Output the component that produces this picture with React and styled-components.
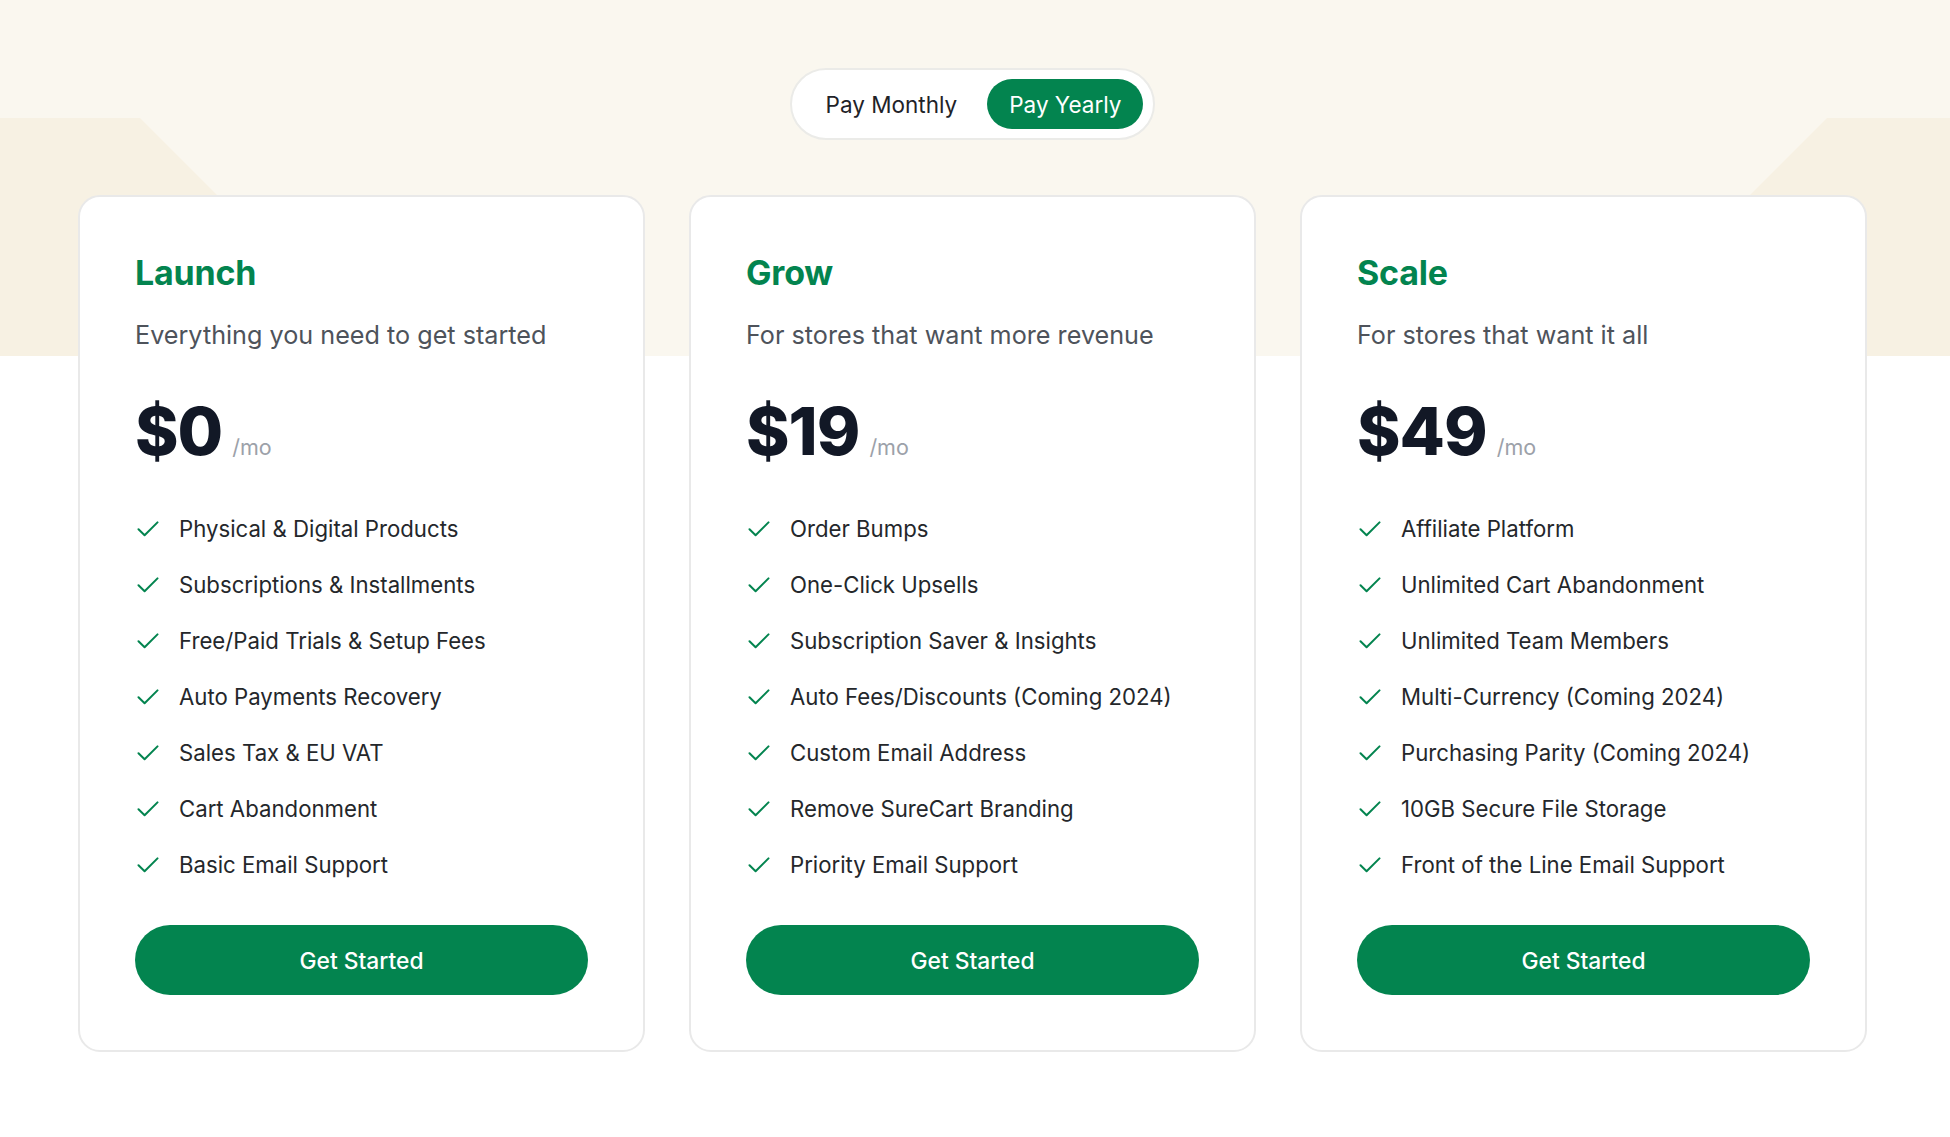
import React, { useState } from 'react';
import styled, { createGlobalStyle } from 'styled-components';

const GlobalStyle = createGlobalStyle`
  * { box-sizing: border-box; }
  body {
    margin: 0;
    font-family: Inter, "Noto Sans", sans-serif;
    background: #ffffff;
    -webkit-font-smoothing: antialiased;
  }
`;

const Page = styled.div`
  position: relative;
  min-height: 1137px;
  padding-top: 68px;
  background: #ffffff;

  /* cream band with darker side wedges */
  &::before {
    content: '';
    position: absolute;
    left: 0;
    right: 0;
    top: 0;
    height: 356px;
    background: #f7f1e3;
  }

  &::after {
    content: '';
    position: absolute;
    left: 0;
    right: 0;
    top: 0;
    height: 356px;
    background: #faf7ef;
    clip-path: polygon(
      0 0, 100% 0, 100% 118px, calc(100% - 123px) 118px,
      calc(100% - 361px) 356px, 378px 356px, 140px 118px, 0 118px
    );
  }
`;

const Content = styled.div`
  position: relative;
  z-index: 1;
  display: flex;
  flex-direction: column;
  align-items: center;
  gap: 55px;
`;

const Toggle = styled.div`
  display: flex;
  align-items: center;
  gap: 8px;
  padding: 9px 10px 9px 12px;
  margin-left: -5px;
  background: #ffffff;
  border: 2px solid #ebebe8;
  border-radius: 999px;
`;

const ToggleButton = styled.button`
  height: 50px;
  padding: 0 22px;
  border: none;
  border-radius: 999px;
  font-family: Inter, sans-serif;
  font-size: 22.5px;
  font-weight: 400;
  cursor: pointer;
  background: ${(p) => (p.$active ? '#03844f' : 'transparent')};
  color: ${(p) => (p.$active ? '#ffffff' : '#1f2328')};
`;

const Cards = styled.div`
  display: grid;
  grid-template-columns: repeat(3, 567px);
  gap: 44px;
  margin-left: -5px;
`;

const Card = styled.div`
  display: flex;
  flex-direction: column;
  background: #ffffff;
  border: 2px solid #e9e9e9;
  border-radius: 22px;
  padding: 54px 55px 55px;
`;

const Title = styled.h2`
  margin: 0;
  font-size: 34px;
  line-height: 44px;
  font-weight: 700;
  color: #03844f;
  letter-spacing: -0.2px;
`;

const Subtitle = styled.p`
  margin: 23px 0 0;
  font-size: 25.2px;
  line-height: 34px;
  color: #4e535b;
`;

const PriceRow = styled.div`
  display: flex;
  align-items: baseline;
  gap: 10px;
  margin-top: 39px;
`;

const Price = styled.span`
  font-size: 66px;
  line-height: 80px;
  font-weight: 800;
  color: #121826;
  letter-spacing: -1px;
`;

const Per = styled.span`
  font-size: 21.5px;
  color: #9ca1a9;
`;

const Features = styled.ul`
  list-style: none;
  margin: 41px 0 0;
  padding: 0;
  display: flex;
  flex-direction: column;
  gap: 23px;
`;

const Feature = styled.li`
  display: flex;
  align-items: center;
  gap: 20px;
  font-size: 22.2px;
  line-height: 33px;
  color: #24272b;

  svg {
    margin-left: 2px;
    flex-shrink: 0;
  }
`;

const CtaButton = styled.button`
  margin-top: 44px;
  height: 70px;
  width: 100%;
  border: none;
  border-radius: 999px;
  background: #03844f;
  color: #ffffff;
  font-family: Inter, sans-serif;
  font-size: 22.8px;
  font-weight: 500;
  cursor: pointer;
`;

const CheckIcon = () => (
  <svg width="22" height="16" viewBox="0 0 22 16" fill="none">
    <path
      d="M1.5 8.2 L7.6 14.3 L20.5 1.4"
      stroke="#03844f"
      strokeWidth="2"
      strokeLinecap="round"
      strokeLinejoin="round"
    />
  </svg>
);

const plans = [
  {
    name: 'Launch',
    desc: 'Everything you need to get started',
    price: '$0',
    features: [
      'Physical & Digital Products',
      'Subscriptions & Installments',
      'Free/Paid Trials & Setup Fees',
      'Auto Payments Recovery',
      'Sales Tax & EU VAT',
      'Cart Abandonment',
      'Basic Email Support',
    ],
  },
  {
    name: 'Grow',
    desc: 'For stores that want more revenue',
    price: '$19',
    features: [
      'Order Bumps',
      'One-Click Upsells',
      'Subscription Saver & Insights',
      'Auto Fees/Discounts (Coming 2024)',
      'Custom Email Address',
      'Remove SureCart Branding',
      'Priority Email Support',
    ],
  },
  {
    name: 'Scale',
    desc: 'For stores that want it all',
    price: '$49',
    features: [
      'Affiliate Platform',
      'Unlimited Cart Abandonment',
      'Unlimited Team Members',
      'Multi-Currency (Coming 2024)',
      'Purchasing Parity (Coming 2024)',
      '10GB Secure File Storage',
      'Front of the Line Email Support',
    ],
  },
];

const App = () => {
  const [yearly, setYearly] = useState(true);

  return (
    <>
      <GlobalStyle />
      <Page>
        <Content>
          <Toggle>
            <ToggleButton $active={!yearly} onClick={() => setYearly(false)}>
              Pay Monthly
            </ToggleButton>
            <ToggleButton $active={yearly} onClick={() => setYearly(true)}>
              Pay Yearly
            </ToggleButton>
          </Toggle>

          <Cards>
            {plans.map((plan) => (
              <Card key={plan.name}>
                <Title>{plan.name}</Title>
                <Subtitle>{plan.desc}</Subtitle>
                <PriceRow>
                  <Price>{plan.price}</Price>
                  <Per>/mo</Per>
                </PriceRow>
                <Features>
                  {plan.features.map((f) => (
                    <Feature key={f}>
                      <CheckIcon />
                      {f}
                    </Feature>
                  ))}
                </Features>
                <CtaButton>Get Started</CtaButton>
              </Card>
            ))}
          </Cards>
        </Content>
      </Page>
    </>
  );
};

export default App;
